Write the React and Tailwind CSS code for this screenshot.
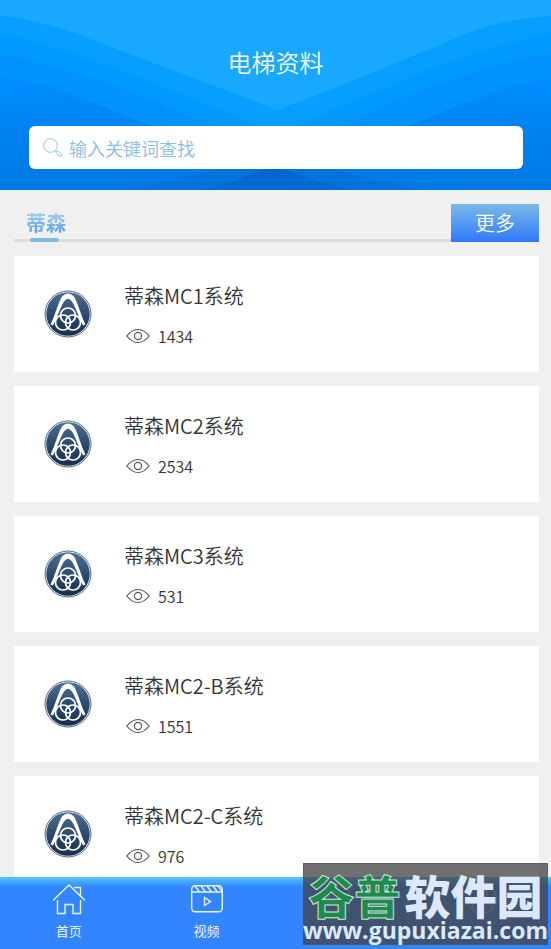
import React from "react";

const systems = [
  { name: "蒂森MC1系统", views: 1434 },
  { name: "蒂森MC2系统", views: 2534 },
  { name: "蒂森MC3系统", views: 531 },
  { name: "蒂森MC2-B系统", views: 1551 },
  { name: "蒂森MC2-C系统", views: 976 },
];

function HeaderWaves() {
  return (
    <svg className="absolute inset-0 h-full w-full" viewBox="0 0 551 190" preserveAspectRatio="none" aria-hidden="true">
      <defs>
        <linearGradient id="base" x1="0" y1="0" x2="0" y2="1">
          <stop offset="0.4" stopColor="#008eff" />
          <stop offset="0.7" stopColor="#0082f0" />
          <stop offset="1" stopColor="#0078e4" />
        </linearGradient>
        <linearGradient id="deep" x1="0" y1="0" x2="0" y2="1">
          <stop offset="0" stopColor="#0064cb" />
          <stop offset="1" stopColor="#006ad4" />
        </linearGradient>
      </defs>
      <rect width="551" height="190" fill="url(#base)" />
      <path d="M0 0V77Q60 86 160 130L278 190L400 130Q490 90 551 78V0Z" fill="#0092ff" />
      <path d="M0 0V54Q70 68 150 99L240 138H316L400 99Q480 65 551 54V0Z" fill="#0099ff" />
      <path d="M0 0V33Q70 50 150 82L278 134L400 82Q480 48 551 33V0Z" fill="#069eff" />
      <path d="M0 0V15Q50 22 90 39Q190 77 278 110Q370 75 470 32Q510 18 551 16V0Z" fill="#18a8ff" />
      <path d="M125 190Q200 178 276 150Q350 178 425 190Z" fill="#0073dc" />
      <path d="M203 190Q245 178 274 165Q310 180 350 190Z" fill="url(#deep)" />
    </svg>
  );
}

function SearchIcon() {
  return (
    <svg className="h-5 w-5 shrink-0" viewBox="0 0 20 20" fill="none" stroke="#91c4ea" aria-hidden="true">
      <circle cx="7.5" cy="7.5" r="6.8" />
      <path d="M12 12.500l1.5 1.5M13.500 13.200q1-.8 2 .2l2.5 2.5q1 1.2.2 2.2t-2.2 0L13.500 15.500q-1-1.2 0-2.3z" />
    </svg>
  );
}

function BrandLogo() {
  return (
    <svg className="h-12 w-12 shrink-0" viewBox="0 0 48 48" fill="none" aria-hidden="true">
      <defs>
        <linearGradient id="disc" x1="0" y1="0" x2="0" y2="1">
          <stop offset="0" stopColor="#4d6f92" />
          <stop offset="0.55" stopColor="#29486c" />
          <stop offset="1" stopColor="#182e4c" />
        </linearGradient>
      </defs>
      <circle cx="24" cy="24" r="23" fill="#fff" stroke="#4d6580" strokeWidth="1" />
      <circle cx="24" cy="24" r="21.8" fill="url(#disc)" />
      <path d="M6.5 34.5C11 26 14 13 18 6.500Q24 .5 30 6.500C34 13 37 26 41.500 34.500L39 35.500C35 28 32 18 28 11.500Q24 6 20 11.500C16 18 13 28 9 35.500Z" fill="#fff" />
      <g stroke="#fff" strokeWidth="1.7">
        <circle cx="24" cy="25.500" r="7.500" />
        <circle cx="19" cy="32.500" r="7.500" />
        <circle cx="29" cy="32.500" r="7.500" />
      </g>
    </svg>
  );
}

function EyeIcon() {
  return (
    <svg className="h-4 w-6" viewBox="0 0 24 16" fill="none" stroke="#555" strokeWidth="1.2" aria-hidden="true">
      <path d="M.8 8Q6 1.500 12 1.500T23.200 8Q18 14.500 12 14.500T.8 8z" />
      <circle cx="12" cy="8" r="3.600" />
    </svg>
  );
}

function HomeIcon() {
  return (
    <svg className="h-8 w-8" viewBox="0 0 32 32" fill="none" stroke="#e8f4ff" strokeWidth="1.4" aria-hidden="true">
      <path d="M0 17.500L16 2l16 15.500M21 4.500h6.500v8M4.500 17v13.500h7.500v-9h8v9h7.500V17" />
    </svg>
  );
}

function VideoIcon() {
  return (
    <svg className="h-8 w-8" viewBox="0 0 32 32" fill="none" stroke="#e8f4ff" strokeWidth="1.4" aria-hidden="true">
      <rect x=".7" y="2.700" width="30.600" height="26" rx="3.500" />
      <path d="M1 9h30M4 3l4.500 6M10 3l4.500 6M16 3l4.500 6M22 3l4.500 6M27 3l4 5M13.500 14.500v8l6-4z" />
    </svg>
  );
}

function DocumentIcon() {
  return (
    <svg className="h-8 w-8" viewBox="0 0 32 32" fill="none" stroke="#e8f4ff" strokeOpacity="0.6" aria-hidden="true">
      <rect x="1" y="4" width="20" height="25" />
      <path d="M6 10h10M6 16h10" />
    </svg>
  );
}

function UserIcon() {
  return (
    <svg className="h-8 w-8" viewBox="0 0 32 32" fill="none" stroke="#e8f4ff" strokeOpacity="0.8" aria-hidden="true">
      <circle cx="16" cy="16" r="14.500" />
      <circle cx="16" cy="10" r="5" />
      <path d="M6 26q1-11 10-11t10 11" />
    </svg>
  );
}

const tabs = [
  { id: "home", label: "首页", Icon: HomeIcon },
  { id: "video", label: "视频", Icon: VideoIcon },
  { id: "docs", Icon: DocumentIcon },
  { id: "user", Icon: UserIcon },
];

export default function App() {
  return (
    <div className="relative flex h-screen flex-col overflow-hidden bg-[#f0f0f0] font-['Noto_Sans_CJK_SC',sans-serif] font-[350] text-[#333]">
      <header className="relative shrink-0 px-7 pt-11 pb-[21px]">
        <HeaderWaves />
        <h1 className="relative text-center text-2xl leading-9 text-white">电梯资料</h1>
        <label className="relative mt-[46px] ml-px flex h-[43px] items-center gap-1.5 rounded-md bg-white px-3.5">
          <SearchIcon />
          <input
            type="search"
            aria-label="输入关键词查找"
            placeholder="输入关键词查找"
            className="min-w-0 flex-1 bg-transparent text-lg leading-6 outline-none placeholder:text-[#88bde6]"
          />
        </label>
      </header>

      <main className="min-h-0 flex-1 overflow-hidden pt-3.5 pr-3 pl-3.5">
        <div className="flex h-[38px] items-stretch">
          <div className="flex flex-1 items-end border-b-3 border-[#dcdcdc] pl-3">
            <div className="relative">
              <h2 className="bg-linear-to-b from-[#b4dcf0] to-[#4a8ee6] bg-clip-text text-xl leading-8 font-bold text-transparent">
                蒂森
              </h2>
              <span className="absolute -bottom-[3px] left-1 h-1 w-[29px] rounded-xs bg-[#7ebae4]" />
            </div>
          </div>
          <button className="w-[88px] bg-linear-to-b from-[#7bb9e6] to-[#3077fa] text-xl text-white">更多</button>
        </div>

        <ul className="mt-3.5 flex flex-col gap-3.5">
          {systems.map((s) => (
            <li key={s.name} className="flex h-[116px] items-center gap-8 bg-white pl-[30px]">
              <BrandLogo />
              <div className="flex flex-col gap-2 pt-1">
                <h3 className="text-xl leading-8">{s.name}</h3>
                <p className="flex items-center gap-2 pl-0.5 text-base leading-8">
                  <EyeIcon />
                  {s.views}
                </p>
              </div>
            </li>
          ))}
        </ul>
      </main>

      <nav className="grid h-[72px] shrink-0 grid-cols-4 bg-linear-to-b from-[#55c8ff] to-[#3385ff] to-[10px] text-white">
        {tabs.map(({ id, label, Icon }) => (
          <a key={id} href={`#${id}`} aria-label={label ?? id} className="flex flex-col items-center pt-1.5 text-[13px] leading-8">
            <Icon />
            {label}
          </a>
        ))}
      </nav>

      <aside className="absolute right-[3px] bottom-1 flex h-[82px] w-[245px] flex-col items-center border border-[#555]/60 bg-[#434343]/76 text-[#dde8ff]">
        <p className="mt-1.5 flex gap-1 text-[46px] leading-[48px] font-black whitespace-nowrap">
          <span className="text-[#1f8a4c] [-webkit-text-stroke:1px_#c4e5dc]">谷普</span>
          <span>软件园</span>
        </p>
        <p className="font-['Open_Sans',sans-serif] text-[23px] leading-6 font-bold whitespace-nowrap">www.gupuxiazai.com</p>
      </aside>
    </div>
  );
}
